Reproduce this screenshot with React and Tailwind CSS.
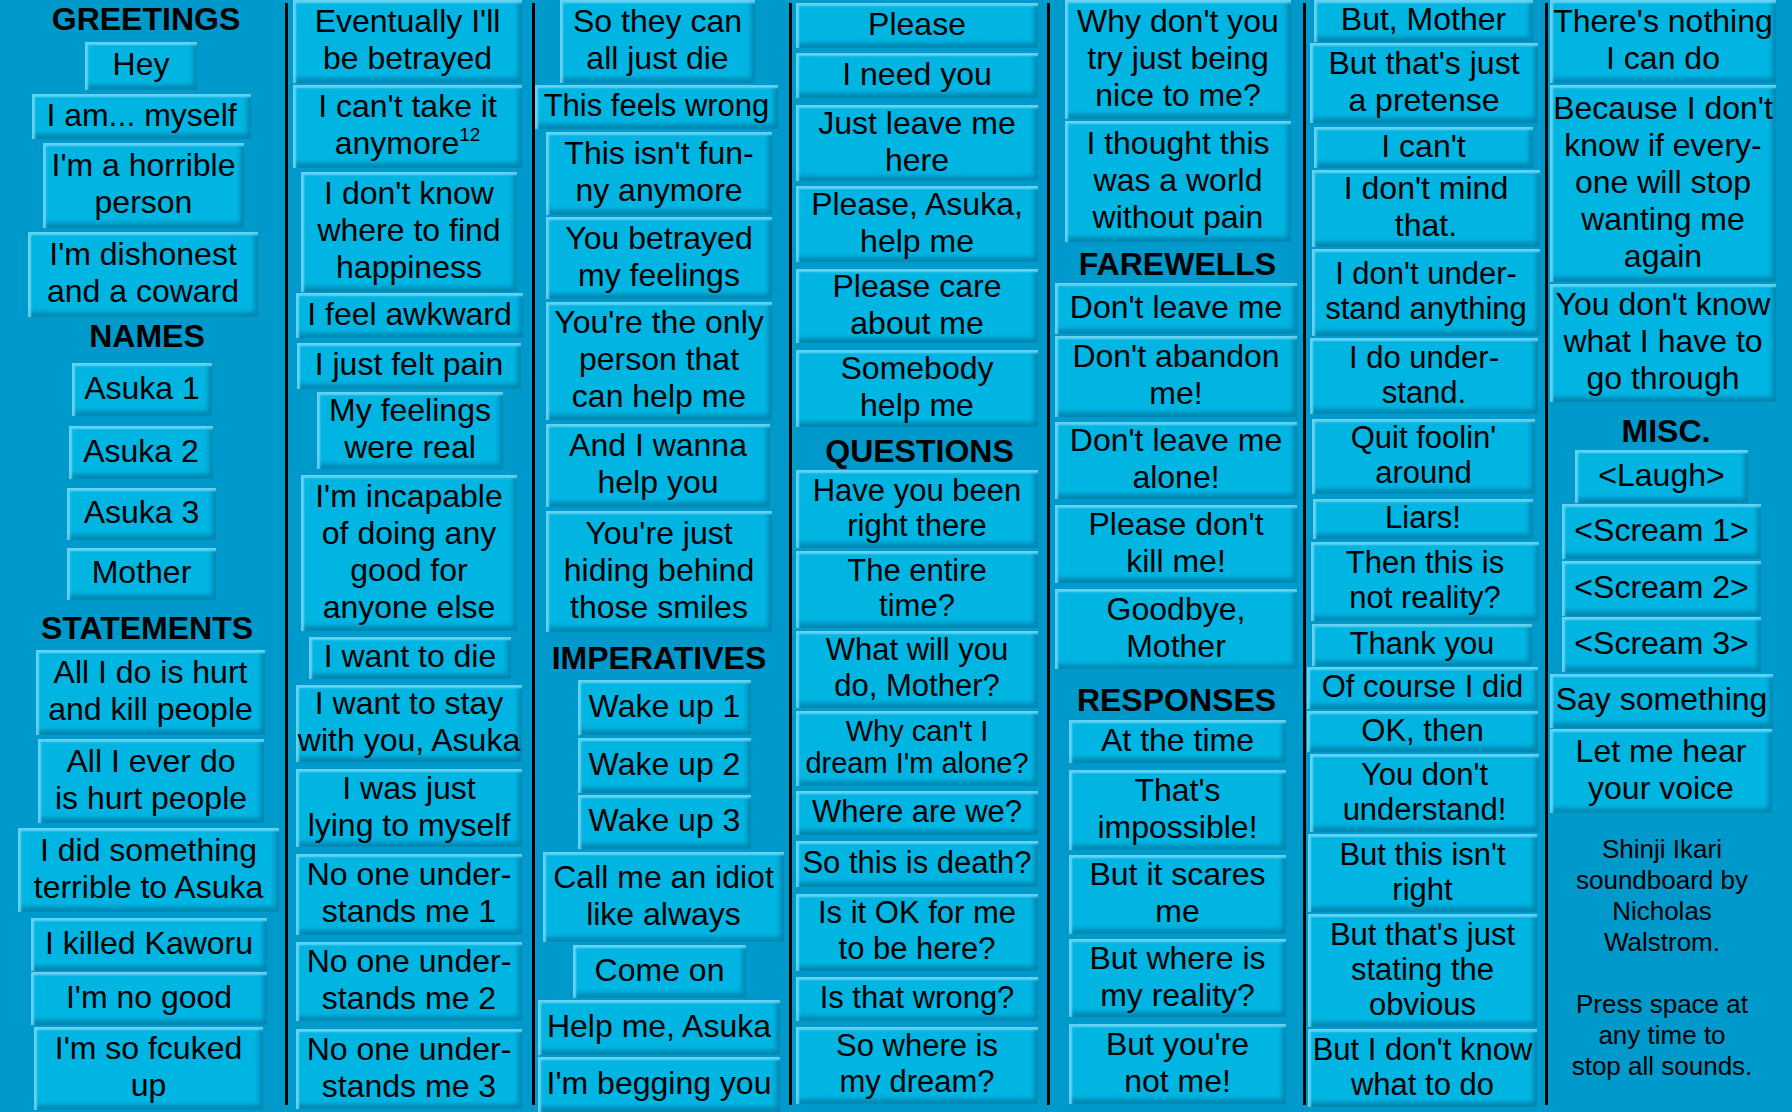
import React from "react";

const BTN =
  "flex shrink-0 items-center justify-center text-center whitespace-pre pb-[3px] text-black bg-[#00b5e2] shadow-[inset_3px_3px_2px_rgba(110,215,245,0.9),inset_-4px_-5px_4px_rgba(0,100,140,0.55)]";
const BASE = "text-[32px] leading-[37px]";
const HEAD = "w-full shrink-0 text-center font-bold text-[32px] leading-[37px] text-black";

const anymore = (
  <>
    I can't take it{"\n"}anymore
    <sup className="relative -top-[13px] align-baseline text-[19px] leading-none">12</sup>
  </>
);

const columns = [
  {
    w: "w-[285px]",
    items: [
      { h: "GREETINGS", c: "mt-[1px] pl-[7px]" },
      ["Hey", "ml-[85px] mt-[4px] w-[112px] h-[48px]"],
      ["I am... myself", "ml-[32px] mt-[4px] w-[219px] h-[45px]"],
      ["I'm a horrible\nperson", "ml-[43px] mt-[4px] w-[201px] h-[85px]"],
      ["I'm dishonest\nand a coward", "ml-[28px] mt-[4px] w-[230px] h-[85px]"],
      { h: "NAMES", c: "mt-[1px] pl-[9px]" },
      ["Asuka 1", "ml-[72px] mt-[8px] w-[140px] h-[53px]"],
      ["Asuka 2", "ml-[69px] mt-[10px] w-[144px] h-[53px]"],
      ["Asuka 3", "ml-[67px] mt-[9px] w-[149px] h-[52px]"],
      ["Mother", "ml-[67px] mt-[8px] w-[149px] h-[52px]"],
      { h: "STATEMENTS", c: "mt-[10px] pl-[9px]" },
      ["All I do is hurt\nand kill people", "ml-[36px] mt-[3px] w-[229px] h-[85px]"],
      ["All I ever do\nis hurt people", "ml-[38px] mt-[4px] w-[226px] h-[84px]"],
      ["I did something\nterrible to Asuka", "ml-[18px] mt-[5px] w-[261px] h-[84px]"],
      ["I killed Kaworu", "ml-[31px] mt-[6px] w-[236px] h-[53px]"],
      ["I'm no good", "ml-[31px] mt-[1px] w-[236px] h-[53px]"],
      ["I'm so fcuked\nup", "ml-[34px] mt-[2px] w-[229px] h-[83px]"],
    ],
  },
  {
    w: "w-[244px]",
    items: [
      ["Eventually I'll\nbe betrayed", "ml-[5px] w-[229px] h-[83px]"],
      [anymore, "ml-[5px] mt-[2px] w-[229px] h-[83px]"],
      ["I don't know\nwhere to find\nhappiness", "ml-[13px] mt-[4px] w-[216px] h-[120px]"],
      ["I feel awkward", "ml-[8px] mt-[1px] w-[227px] h-[45px]"],
      ["I just felt pain", "ml-[9px] mt-[5px] w-[224px] h-[46px]"],
      ["My feelings\nwere real", "ml-[29px] mt-[3px] w-[186px] h-[77px]"],
      ["I'm incapable\nof doing any\ngood for\nanyone else", "ml-[13px] mt-[6px] w-[216px] h-[156px]"],
      ["I want to die", "ml-[21px] mt-[6px] w-[202px] h-[42px]"],
      ["I want to stay\nwith you, Asuka", "ml-[8px] mt-[6px] w-[226px] h-[77px]"],
      ["I was just\nlying to myself", "ml-[8px] mt-[7px] w-[226px] h-[78px]"],
      ["No one under-\nstands me 1", "ml-[8px] mt-[7px] w-[226px] h-[81px]"],
      ["No one under-\nstands me 2", "ml-[8px] mt-[7px] w-[226px] h-[79px]"],
      ["No one under-\nstands me 3", "ml-[8px] mt-[8px] w-[226px] h-[80px]"],
    ],
  },
  {
    w: "w-[254px]",
    items: [
      ["So they can\nall just die", "ml-[25px] w-[195px] h-[83px]"],
      ["This feels wrong", "ml-0 mt-[2px] w-[243px] h-[44px]", "text-[31px] leading-[37px]"],
      ["This isn't fun-\nny anymore", "ml-[11px] mt-[3px] w-[226px] h-[83px]"],
      ["You betrayed\nmy feelings", "ml-[11px] mt-[2px] w-[226px] h-[82px]"],
      ["You're the only\nperson that\ncan help me", "ml-[11px] mt-[3px] w-[226px] h-[118px]"],
      ["And I wanna\nhelp you", "ml-[11px] mt-[4px] w-[224px] h-[83px]"],
      ["You're just\nhiding behind\nthose smiles", "ml-[11px] mt-[4px] w-[226px] h-[121px]"],
      { h: "IMPERATIVES", c: "mt-[8px] pr-[6px]" },
      ["Wake up 1", "ml-[43px] mt-[3px] w-[173px] h-[55px]"],
      ["Wake up 2", "ml-[43px] mt-[3px] w-[173px] h-[55px]"],
      ["Wake up 3", "ml-[43px] mt-[2px] w-[173px] h-[54px]"],
      ["Call me an idiot\nlike always", "ml-[8px] mt-[3px] w-[241px] h-[90px]"],
      ["Come on", "ml-[38px] mt-[3px] w-[173px] h-[53px]"],
      ["Help me, Asuka", "ml-[3px] mt-[2px] w-[242px] h-[55px]"],
      ["I'm begging you", "ml-[3px] mt-[2px] w-[242px] h-[55px]"],
    ],
  },
  {
    w: "w-[255px]",
    items: [
      ["Please", "ml-[4px] mt-[3px] w-[242px] h-[45px]"],
      ["I need you", "ml-[4px] mt-[5px] w-[242px] h-[45px]"],
      ["Just leave me\nhere", "ml-[4px] mt-[7px] w-[242px] h-[76px]"],
      ["Please, Asuka,\nhelp me", "ml-[4px] mt-[5px] w-[242px] h-[76px]"],
      ["Please care\nabout me", "ml-[4px] mt-[7px] w-[242px] h-[74px]"],
      ["Somebody\nhelp me", "ml-[4px] mt-[7px] w-[242px] h-[77px]"],
      { h: "QUESTIONS", c: "mt-[6px]" },
      ["Have you been\nright there", "ml-[4px] w-[242px] h-[78px]", "text-[31px] leading-[35px]"],
      ["The entire\ntime?", "ml-[4px] mt-[3px] w-[242px] h-[77px]", "text-[31px] leading-[35px]"],
      ["What will you\ndo, Mother?", "ml-[4px] mt-[3px] w-[242px] h-[77px]", "text-[31px] leading-[36px]"],
      ["Why can't I\ndream I'm alone?", "ml-[4px] mt-[3px] w-[242px] h-[75px]", "text-[29px] leading-[32px]"],
      ["Where are we?", "ml-[4px] mt-[5px] w-[242px] h-[44px]", "text-[31px] leading-[37px]"],
      ["So this is death?", "ml-[4px] mt-[6px] w-[242px] h-[46px]", "text-[31px] leading-[37px]"],
      ["Is it OK for me\nto be here?", "ml-[4px] mt-[7px] w-[242px] h-[77px]", "text-[31px] leading-[36px]"],
      ["Is that wrong?", "ml-[4px] mt-[6px] w-[242px] h-[44px]", "text-[31px] leading-[37px]"],
      ["So where is\nmy dream?", "ml-[4px] mt-[6px] w-[242px] h-[77px]", "text-[31px] leading-[36px]"],
    ],
  },
  {
    w: "w-[253px]",
    items: [
      ["Why don't you\ntry just being\nnice to me?", "ml-[15px] w-[226px] h-[119px]"],
      ["I thought this\nwas a world\nwithout pain", "ml-[15px] mt-[2px] w-[226px] h-[121px]"],
      { h: "FAREWELLS", c: "mt-[4px] pl-[2px]" },
      ["Don't leave me", "ml-[5px] w-[242px] h-[51px]"],
      ["Don't abandon\nme!", "ml-[5px] mt-[2px] w-[242px] h-[81px]"],
      ["Don't leave me\nalone!", "ml-[5px] mt-[5px] w-[242px] h-[77px]"],
      ["Please don't\nkill me!", "ml-[5px] mt-[6px] w-[242px] h-[78px]"],
      ["Goodbye,\nMother", "ml-[5px] mt-[6px] w-[242px] h-[80px]"],
      { h: "RESPONSES", c: "mt-[13px]" },
      ["At the time", "ml-[19px] mt-[1px] w-[217px] h-[43px]"],
      ["That's\nimpossible!", "ml-[19px] mt-[7px] w-[217px] h-[80px]"],
      ["But it scares\nme", "ml-[19px] mt-[5px] w-[217px] h-[79px]"],
      ["But where is\nmy reality?", "ml-[19px] mt-[5px] w-[217px] h-[78px]"],
      ["But you're\nnot me!", "ml-[19px] mt-[7px] w-[217px] h-[80px]"],
    ],
  },
  {
    w: "w-[239px]",
    items: [
      ["But, Mother", "ml-[8px] w-[219px] h-[42px]"],
      ["But that's just\na pretense", "ml-[4px] mt-[1px] w-[228px] h-[80px]"],
      ["I can't", "ml-[8px] mt-[4px] w-[219px] h-[41px]"],
      ["I don't mind\nthat.", "ml-[6px] mt-[2px] w-[228px] h-[77px]"],
      ["I don't under-\nstand anything", "ml-[6px] mt-[2px] w-[228px] h-[87px]", "text-[31px] leading-[35px]"],
      ["I do under-\nstand.", "ml-[4px] mt-[2px] w-[228px] h-[76px]", "text-[31px] leading-[35px]"],
      ["Quit foolin'\naround", "ml-[6px] mt-[5px] w-[223px] h-[75px]", "text-[31px] leading-[35px]"],
      ["Liars!", "ml-[7px] mt-[5px] w-[220px] h-[40px]", "text-[31px] leading-[35px]"],
      ["Then this is\nnot reality?", "ml-[5px] mt-[3px] w-[228px] h-[79px]", "text-[31px] leading-[35px]"],
      ["Thank you", "ml-[6px] mt-[3px] w-[220px] h-[42px]", "text-[31px] leading-[35px]"],
      ["Of course I did", "ml-[1px] mt-[1px] w-[231px] h-[42px]", "text-[31px] leading-[35px]"],
      ["OK, then", "ml-[1px] mt-[2px] w-[231px] h-[41px]", "text-[31px] leading-[35px]"],
      ["You don't\nunderstand!", "ml-[4px] mt-[2px] w-[229px] h-[78px]", "text-[31px] leading-[35px]"],
      ["But this isn't\nright", "ml-[2px] mt-[2px] w-[229px] h-[78px]", "text-[31px] leading-[35px]"],
      ["But that's just\nstating the\nobvious", "ml-[2px] mt-[2px] w-[229px] h-[113px]", "text-[31px] leading-[35px]"],
      ["But I don't know\nwhat to do", "ml-[2px] mt-[2px] w-[229px] h-[78px]", "text-[31px] leading-[35px]"],
    ],
  },
  {
    w: "w-[228px]",
    items: [
      ["There's nothing\nI can do", "ml-[2px] w-[226px] h-[83px]"],
      ["Because I don't\nknow if every-\none will stop\nwanting me\nagain", "ml-[2px] mt-[2px] w-[226px] h-[197px]"],
      ["You don't know\nwhat I have to\ngo through", "ml-[2px] mt-[2px] w-[226px] h-[118px]"],
      { h: "MISC.", c: "mt-[11px] pl-[8px]" },
      ["<Laugh>", "ml-[27px] w-[173px] h-[53px]"],
      ["<Scream 1>", "ml-[14px] mt-[1px] w-[199px] h-[55px]"],
      ["<Scream 2>", "ml-[14px] mt-[2px] w-[199px] h-[55px]"],
      ["<Scream 3>", "ml-[14px] mt-[1px] w-[199px] h-[55px]"],
      ["Say something", "ml-[2px] mt-[2px] w-[223px] h-[54px]"],
      ["Let me hear\nyour voice", "ml-[2px] mt-[1px] w-[222px] h-[84px]"],
      { credits: true },
    ],
  },
];

function Item({ item }) {
  if (item.credits) {
    return (
      <p className="mt-[21px] w-full text-center text-[26px] leading-[31px] text-black">
        Shinji Ikari
        <br />
        soundboard by
        <br />
        Nicholas
        <br />
        Walstrom.
        <br />
        <br />
        Press space at
        <br />
        any time to
        <br />
        stop all sounds.
      </p>
    );
  }
  if (item.h) {
    return <h2 className={`${HEAD} ${item.c}`}>{item.h}</h2>;
  }
  const [text, c, font] = item;
  return (
    <button className={`${BTN} ${font || BASE} ${c}`}>
      <span>{text}</span>
    </button>
  );
}

export default function App() {
  return (
    <div className="flex w-[1792px] h-[1112px] overflow-hidden bg-[#0099cc] font-['Liberation_Sans',Arial,sans-serif]">
      {columns.map((col, i) => (
        <React.Fragment key={i}>
          {i > 0 && <div className="w-[3px] h-[1102px] mt-[3px] shrink-0 bg-black" />}
          <div className={`${col.w} shrink-0 flex flex-col items-start`}>
            {col.items.map((it, j) => (
              <Item key={j} item={it} />
            ))}
          </div>
        </React.Fragment>
      ))}
    </div>
  );
}
